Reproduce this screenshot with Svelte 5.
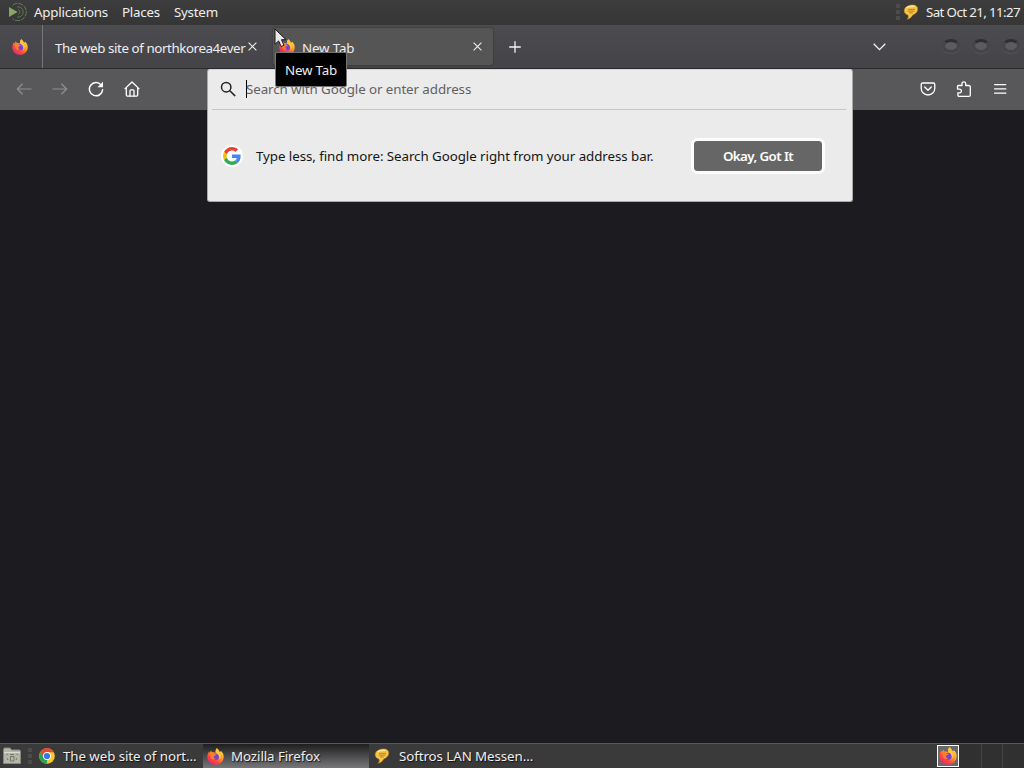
<script lang="ts">
  const menus = ['Applications', 'Places', 'System'];
  const windowButtons = ['minimize', 'maximize', 'close'];
</script>

{#snippet firefox(size: number)}
  <svg width={size} height={size} viewBox="0 0 16 16" aria-hidden="true">
    <defs>
      <linearGradient id="fx-body" x1="0.85" y1="0.05" x2="0.2" y2="0.95">
        <stop offset="0" stop-color="#ffe24a" />
        <stop offset="0.4" stop-color="#ff9a2a" />
        <stop offset="0.7" stop-color="#fb4a3c" />
        <stop offset="1" stop-color="#e5267a" />
      </linearGradient>
    </defs>
    <path fill="url(#fx-body)" d="M9.2 0.2C10.8 1 11.5 2.5 11.9 3.5C12.5 3.6 13 3.2 13.1 2.8C15 4.4 15.9 6.4 15.7 8.7C15.4 12.8 12.2 15.8 8 15.8C3.6 15.8 0.3 12.5 0.3 8.2C0.3 6.1 1.1 4.2 2 3.2L2.3 4.7L3.9 2.3C4 3.2 4.6 3.8 5.3 4.1C6.2 3.9 7.3 4.1 8 4.6C7.8 3.1 8 1.4 9.2 0.2Z" />
    <circle cx="8.2" cy="8.2" r="3.1" fill="#7543d4" />
    <path fill="#ff7a2b" d="M2.6 5C4.3 4.2 6 4.6 7.1 5.7L8.8 6.3C8.2 7.3 7 7.2 6.4 7.9C6 8.8 6.7 10 8.3 10.1C6.6 11.8 4 10.6 3.3 8.4Z" />
    <path fill="#ffc63a" d="M9.2 0.2C11 2 11.1 4 12.2 5.4C13.4 7.2 12.9 9.6 11.3 10.8C11.9 8.4 11.1 6.5 9.4 5.4C7.9 4.2 8 1.8 9.2 0.2Z" />
  </svg>
{/snippet}

{#snippet bubble()}
  <svg width="16" height="16" viewBox="0 0 16 16" aria-hidden="true">
    <path fill="#f8c445" stroke="#d79a24" stroke-width=".5" d="M7.5 1.2C11.5 .5 14.7 1.7 14.6 5.2C14.5 8.6 11.6 9.9 9.6 11C8.6 13.2 6.8 14.6 4.2 15.2C5.6 13.9 5.7 12.3 5 10.9C2.4 10.2 1.2 8.7 1.3 6.4C1.5 3.5 4.2 1.8 7.5 1.2Z" />
    <path fill="none" stroke="#ffe48c" stroke-width="1.4" d="M3.2 4C5 2.3 8 1.9 11.5 2.4" />
    <path fill="none" stroke="#a3741f" stroke-width=".8" d="M5 5.3H12M4.6 7.1H11.5M6 8.9H9.8" />
  </svg>
{/snippet}

{#snippet cross()}
  <svg width="9" height="9" viewBox="0 0 9 9" fill="none" stroke="#eee" stroke-width="1.1" aria-hidden="true">
    <path d="M.6 .6L8.4 8.4M8.4 .6L.6 8.4" />
  </svg>
{/snippet}

<div class="desktop">
  <header class="top-panel">
    <svg class="distro" width="20" height="20" viewBox="0 0 20 20" fill="none" aria-hidden="true">
      <path fill="#87a566" d="M1 5L9.6 10L1 15Z" />
      <path stroke="#66804f" stroke-dasharray="5 1" d="M4.5 3.2A8.6 8.6 0 1 1 4.5 16.8" />
      <path stroke="#5f784b" d="M9 4.9A5.2 5.2 0 1 1 9 15.1" />
      <path stroke="#60784d" stroke-width=".8" d="M10 7.4A2.7 2.7 0 0 1 10 12.6" />
    </svg>
    <nav class="menus">
      {#each menus as menu (menu)}
        <span>{menu}</span>
      {/each}
    </nav>
    <div class="tray">
      <span class="grip"></span>
      {@render bubble()}
      <time>Sat Oct 21, 11:27</time>
    </div>
  </header>

  <main class="browser">
    <div class="tab-strip">
      <div class="view-tab">{@render firefox(16)}</div>
      <div class="tab">
        <span class="tab-title">The web site of northkorea4ever</span>
        {@render cross()}
      </div>
      <div class="tab active">
        {@render firefox(16)}
        <span class="tab-title">New Tab</span>
        {@render cross()}
      </div>
      <svg class="new-tab" width="12" height="12" viewBox="0 0 12 12" stroke="#f2f2f2" stroke-width="1.3" aria-hidden="true">
        <path d="M6 .2V11.8M.2 6H11.8" />
      </svg>
      <svg class="all-tabs" width="13" height="8" viewBox="0 0 13 8" fill="none" stroke="#f2f2f2" stroke-width="1.3" aria-hidden="true">
        <path d="M.7 .8L6.5 6.6L12.3 .8" />
      </svg>
      <div class="window-buttons">
        {#each windowButtons as name (name)}
          <span class="window-button" aria-label={name}></span>
        {/each}
      </div>
    </div>

    <div class="toolbar">
      <div class="nav-buttons">
        <svg width="16" height="16" viewBox="0 0 16 16" fill="none" stroke="#909092" stroke-width="1.2" aria-hidden="true">
          <path d="M15.5 8H1.3M6.6 2.8L1.3 8L6.6 13.2" />
        </svg>
        <svg width="16" height="16" viewBox="0 0 16 16" fill="none" stroke="#909092" stroke-width="1.2" aria-hidden="true">
          <path d="M.5 8H14.7M9.4 2.8L14.7 8L9.4 13.2" />
        </svg>
        <svg width="16" height="16" viewBox="0 0 16 16" fill="none" stroke="#fff" stroke-width="1.5" stroke-linecap="round" aria-hidden="true">
          <path d="M13.2 4.1A6.6 6.6 0 1 0 14.6 8.7" />
          <path fill="#fff" stroke="none" d="M15 .8V6.3H9.5Z" />
        </svg>
        <svg width="16" height="16" viewBox="0 0 16 16" fill="none" stroke="#fff" stroke-width="1.3" stroke-linejoin="round" stroke-linecap="round" aria-hidden="true">
          <path d="M1 7.6L8 1L15 7.6M2.3 6.5V14C2.3 14.8 2.6 15.1 3.4 15.1H12.6C13.4 15.1 13.7 14.8 13.7 14V6.5" />
          <path d="M6 15V9.8C6 9.1 6.3 8.8 7 8.8H9C9.7 8.8 10 9.1 10 9.8V15" />
        </svg>
      </div>
      <div class="toolbar-actions">
        <svg width="16" height="16" viewBox="0 0 16 16" fill="none" stroke="#fff" stroke-width="1.3" stroke-linejoin="round" stroke-linecap="round" aria-hidden="true">
          <path d="M2.7 2H13.3C14.3 2 14.8 2.5 14.8 3.5V7.2C14.8 11.1 11.8 14 8 14C4.2 14 1.2 11.1 1.2 7.2V3.5C1.2 2.5 1.7 2 2.7 2Z" />
          <path d="M4.7 6L8 9.2L11.3 6" />
        </svg>
        <svg width="16" height="16" viewBox="0 0 16 16" fill="none" stroke="#fff" stroke-width="1.3" stroke-linejoin="round" aria-hidden="true">
          <path d="M2.4 4.5H6V2.6C6 .2 9.7 .2 9.7 2.6V4.5H12.7C13.8 4.5 14.3 5 14.3 6V14C14.3 14.9 13.9 15.3 13 15.3H3.2C2.3 15.3 1.9 14.9 1.9 14V11.8H3.5C6 11.8 6 8.1 3.5 8.1H1.5V5.4C1.5 4.8 1.8 4.5 2.4 4.5Z" />
        </svg>
        <svg width="16" height="16" viewBox="0 0 16 16" fill="none" stroke="#fff" stroke-width="1.3" stroke-linecap="round" aria-hidden="true">
          <path d="M2.6 3.6H13.8M2.6 7.9H13.8M2.6 12.2H13.8" />
        </svg>
      </div>
    </div>

    <!-- Address bar, opened over the toolbar -->
    <section class="urlbar">
      <div class="urlbar-input">
        <svg width="16" height="16" viewBox="0 0 16 16" fill="none" stroke="#222" stroke-width="1.5" stroke-linecap="round" aria-hidden="true">
          <circle cx="6.2" cy="6.2" r="4.7" />
          <path d="M9.8 9.8L14.8 14.6" />
        </svg>
        <span class="caret"></span>
        <span class="placeholder">Search with Google or enter address</span>
      </div>
      <div class="tip">
        <span class="google">
          <svg width="18" height="18" viewBox="0 0 48 48" aria-hidden="true">
            <path fill="#ea4335" d="M24 9.5c3.5 0 6.7 1.2 9.2 3.6l6.9-6.9C35.9 2.4 30.5 0 24 0 14.6 0 6.5 5.4 2.6 13.2l8 6.2C12.4 13.7 17.7 9.5 24 9.5z" />
            <path fill="#4285f4" d="M47 24.6c0-1.6-.2-3.1-.4-4.6H24v9h12.9c-.6 3-2.2 5.5-4.7 7.2l7.7 6C44.4 38 47 31.8 47 24.6z" />
            <path fill="#fbbc05" d="M10.5 28.6c-.5-1.5-.8-3-.8-4.6s.3-3.1.8-4.6l-8-6.2C1 16.5 0 20.1 0 24s.9 7.5 2.6 10.8z" />
            <path fill="#34a853" d="M24 48c6.5 0 11.9-2.1 15.9-5.8l-7.7-6c-2.2 1.4-4.9 2.3-8.2 2.3-6.3 0-11.6-4.2-13.5-9.9l-8 6.2C6.5 42.6 14.6 48 24 48z" />
          </svg>
        </span>
        <p>Type less, find more: Search Google right from your address bar.</p>
        <button>Okay, Got It</button>
      </div>
    </section>

    <div class="tooltip">New Tab</div>
    <svg class="cursor" width="14" height="21" viewBox="0 0 14 21" aria-hidden="true">
      <path fill="#e8e8e8" stroke="#1a1a1a" stroke-width="1" d="M1 1V16.2L4.6 12.9L7.2 18.6L10 17.3L7.5 11.7H12Z" />
    </svg>
  </main>

  <footer class="bottom-panel">
    <svg class="files" width="20" height="18" viewBox="0 0 20 18" aria-hidden="true">
      <path fill="#b5b7a9" stroke="#868879" d="M1.5 2.5C1.5 1.5 2 1 3 1H8L9.5 3H17C18 3 18.5 3.5 18.5 4.5V16.5H1.5Z" />
      <path stroke="#dcddd2" d="M2 5.5H18" />
      <path fill="none" stroke="#747668" d="M4.5 8L6 7M8 7.5H12M14.5 7L16 8M8.5 9.5H12V14H8.5ZM5 11L6 13M15 11L14 13" />
    </svg>
    <span class="grip"></span>
    <div class="task chrome">
      <svg width="16" height="16" viewBox="0 0 16 16" aria-hidden="true">
        <circle cx="8" cy="8" r="7.8" fill="#fbc72e" />
        <path fill="#e8453a" d="M1.3 4A7.8 7.8 0 0 1 14.8 4.3H8L4.8 9.9Z" />
        <path fill="#2da44f" d="M1.3 4L4.8 9.9L8.2 11.5L7.7 15.8A7.8 7.8 0 0 1 1.3 4Z" />
        <circle cx="8" cy="8" r="3.9" fill="#fff" />
        <circle cx="8" cy="8" r="3.1" fill="#3878e0" />
      </svg>
      <span>The web site of nort…</span>
    </div>
    <div class="task focused">
      {@render firefox(17)}
      <span>Mozilla Firefox</span>
    </div>
    <div class="task messenger">
      {@render bubble()}
      <span>Softros LAN Messen…</span>
    </div>
    <div class="workspaces">
      <span class="workspace current">{@render firefox(18)}</span>
      <span class="workspace"></span>
      <span class="workspace"></span>
      <span class="workspace"></span>
    </div>
  </footer>
</div>

<style>
  :global(body) {
    margin: 0;
    overflow: hidden;
  }

  .desktop {
    width: 1024px;
    height: 768px;
    display: flex;
    flex-direction: column;
    background: #1c1b1f;
    color: #eee;
    font-family: "Noto Sans", sans-serif;
    font-size: 13.33px;
    line-height: 18px;
    letter-spacing: -0.08px;
    white-space: nowrap;
  }

  svg {
    display: block;
    flex: none;
  }

  .top-panel {
    height: 25px;
    display: flex;
    align-items: center;
    padding: 0 4px 1px 8px;
    box-sizing: border-box;
    background: linear-gradient(#3d3d3d, #363637);
  }

  .menus {
    display: flex;
    gap: 14px;
    margin-left: 6px;
    letter-spacing: -0.22px;
  }

  .tray {
    display: flex;
    align-items: center;
    margin-left: auto;
  }

  .tray time {
    margin-left: 7px;
    letter-spacing: -0.62px;
  }

  .grip {
    width: 4px;
    height: 16px;
    margin-right: 3px;
    background: repeating-linear-gradient(#4c4c4c 0 4px, transparent 4px 6px);
  }

  .browser {
    position: relative;
    flex: 1;
  }

  .tab-strip {
    height: 44px;
    display: flex;
    align-items: center;
    box-sizing: border-box;
    border-bottom: 1px solid #29292b;
    background: linear-gradient(#4c4c50, #444448);
  }

  .view-tab {
    width: 43px;
    height: 43px;
    display: flex;
    align-items: center;
    padding-left: 12px;
    box-sizing: border-box;
    border-right: 1px solid #77777a;
  }

  .tab {
    width: 214px;
    height: 37px;
    display: flex;
    align-items: center;
    padding-left: 12px;
    box-sizing: border-box;
  }

  .tab-title {
    flex: 1;
    min-width: 0;
    padding-top: 2px;
    letter-spacing: -0.41px;
  }

  .tab.active {
    width: 220px;
    margin-left: 16px;
    padding: 0 11px 0 6px;
    border-radius: 3px;
    background: #555556;
    box-shadow: 0 0 2px #2a2a2c;
  }

  .tab.active .tab-title {
    margin-left: 7px;
    letter-spacing: -0.15px;
  }

  .new-tab {
    margin-left: 16px;
  }

  .all-tabs {
    margin-left: auto;
  }

  .window-buttons {
    display: flex;
    gap: 12px;
    margin: 0 4px 2px 56px;
  }

  .window-button {
    width: 18px;
    height: 14px;
    border: 3px solid #454548;
    border-top-color: #2f2f31;
    border-radius: 50%;
    box-sizing: border-box;
    background: #5c5c5f;
    box-shadow: 0 1px 1px #555558;
  }

  .toolbar {
    height: 41px;
    display: flex;
    align-items: center;
    justify-content: space-between;
    padding: 0 16px 1px;
    box-sizing: border-box;
    background: #58585a;
  }

  .nav-buttons,
  .toolbar-actions {
    display: flex;
    gap: 20px;
  }

  .urlbar {
    position: absolute;
    top: 44px;
    left: 207px;
    width: 646px;
    height: 133px;
    box-sizing: border-box;
    border: 1px solid #a9a9aa;
    border-top-color: #d5d5d5;
    border-radius: 3px;
    background: #ebebeb;
    color: #151515;
  }

  .urlbar-input {
    height: 40px;
    display: flex;
    align-items: center;
    margin: 0 6px 0 4px;
    padding: 0 0 1px 8px;
    box-sizing: border-box;
    border-bottom: 1px solid #c5c5c6;
  }

  .caret {
    width: 1px;
    height: 18px;
    margin-left: 10px;
    background: #000;
  }

  .placeholder {
    margin-left: -1px;
    color: #616161;
  }

  .tip {
    height: 92px;
    display: flex;
    align-items: center;
    padding: 0 30px 0 13px;
  }

  .google {
    width: 22px;
    height: 22px;
    display: grid;
    place-items: center;
    border-radius: 50%;
    background: #fff;
  }

  .tip p {
    margin: 0 0 0 13px;
    letter-spacing: -0.06px;
  }

  .tip button {
    width: 128px;
    height: 30px;
    margin-left: auto;
    padding: 0;
    border: 0;
    border-radius: 3px;
    outline: 3px solid #fcfcfc;
    background: #666;
    color: #fff;
    font: 600 13.33px "Noto Sans", sans-serif;
    letter-spacing: -0.58px;
  }

  .tooltip {
    position: absolute;
    top: 27px;
    left: 275px;
    padding: 8px 9px 7px;
    border: 1px solid #757575;
    border-radius: 2px;
    background: #000;
    letter-spacing: -0.18px;
  }

  .cursor {
    position: absolute;
    top: 3px;
    left: 274px;
  }

  .bottom-panel {
    height: 25px;
    display: flex;
    align-items: center;
    padding-left: 2px;
    box-sizing: border-box;
    border-top: 1px solid #59595b;
    background: #3a3a3b;
  }

  .bottom-panel .grip {
    margin: 0 7px 0 6px;
  }

  .task {
    height: 24px;
    display: flex;
    align-items: center;
    gap: 8px;
    text-shadow: 1px 1px 1px #111;
  }

  .chrome {
    width: 164px;
  }

  .focused {
    width: 166px;
    gap: 7px;
    padding-left: 4px;
    box-sizing: border-box;
    background: linear-gradient(#1e1e1f, #77777a);
  }

  .messenger {
    gap: 9px;
    margin-left: 5px;
  }

  .workspaces {
    height: 24px;
    display: flex;
    align-items: center;
    margin-left: auto;
    background: #303031;
  }

  .workspace {
    width: 21px;
    height: 24px;
    box-sizing: border-box;
    border-right: 1px solid #454547;
  }

  .workspace:last-child {
    border-right: 0;
  }

  .workspace.current {
    width: 22px;
    height: 22px;
    margin-right: 2px;
    border: 1px solid #fff;
    background: #69696b;
    display: grid;
    place-items: center;
  }
</style>
